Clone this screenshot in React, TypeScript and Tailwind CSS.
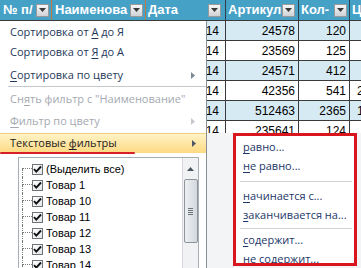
import React from "react";

const rows = [
  { date: "12.01.2014", art: "24578", qty: "120", price: "" },
  { date: "15.01.2014", art: "23569", qty: "125", price: "" },
  { date: "20.01.2014", art: "24571", qty: "412", price: "" },
  { date: "22.01.2014", art: "42356", qty: "541", price: "250" },
  { date: "25.01.2014", art: "512463", qty: "2365", price: "150" },
  { date: "28.01.2014", art: "235641", qty: "124", price: "" },
];

const items = ["(Выделить все)", "Товар 1", "Товар 10", "Товар 11", "Товар 12", "Товар 13", "Товар 14", "Товар 15"];

function FilterButton() {
  return (
    <div className="w-[13px] h-[13px] border border-[#9a9a9a] bg-gradient-to-b from-[#f7f7f7] to-[#cfd2d6] flex items-center justify-center shrink-0">
      <svg width="7" height="4" viewBox="0 0 7 4">
        <path d="M0 0h7L3.5 4z" fill="#3a3a3a" />
      </svg>
    </div>
  );
}

function SubArrow({ color = "#7d8896" }) {
  return (
    <svg width="4" height="7" viewBox="0 0 4 7" className="shrink-0">
      <path d="M0 0l4 3.5L0 7z" fill={color} />
    </svg>
  );
}

function MenuItem({
  children,
  disabled,
  arrow,
  className = "",
}: {
  children: React.ReactNode;
  disabled?: boolean;
  arrow?: boolean;
  className?: string;
}) {
  return (
    <div
      className={`flex items-center shrink-0 h-[20px] pl-[10px] pr-[11px] ${
        disabled ? "text-[#a4a9b0]" : "text-[#1e395b]"
      } ${className}`}
    >
      <span className="flex-1 whitespace-nowrap overflow-hidden">{children}</span>
      {arrow && <SubArrow color={disabled ? "#c3c8ce" : "#7d8896"} />}
    </div>
  );
}

function CheckBox() {
  return (
    <div className="w-[11px] h-[11px] border border-[#6f7479] bg-gradient-to-br from-[#ffffff] to-[#e3e5e8] flex items-center justify-center shrink-0">
      <svg width="9" height="9" viewBox="0 0 9 9">
        <path d="M1 4.2l2.3 2.4L8 1.5" stroke="#111" strokeWidth="1.9" fill="none" />
      </svg>
    </div>
  );
}

function SubItem({ first, rest }: { first: string; rest: string }) {
  return (
    <div className="h-[19px] shrink-0 flex items-center pl-[7px] text-[#1d3767] whitespace-nowrap">
      <span className="underline underline-offset-[2px]">{first}</span>
      {rest}
    </div>
  );
}

export default function App() {
  return (
    <div className="relative w-[361px] h-[268px] overflow-hidden bg-white font-['Liberation_Sans',sans-serif]">
      {/* header */}
      <div className="flex h-[21px] bg-[#46a1c7] text-white font-bold text-[13px] border-b border-[#3a3a3a]">
        <div className="w-[51px] shrink-0 flex items-center pl-[3px] pr-[2px] justify-between">
          <span>№ п/</span>
          <FilterButton />
        </div>
        <div className="w-[95px] shrink-0 flex items-center pl-[3px] pr-[2px] justify-between border-x border-[#c2793f]">
          <span>Наименова</span>
          <FilterButton />
        </div>
        <div className="w-[79px] shrink-0 flex items-center pl-[2px] pr-[4px] justify-between">
          <span>Дата</span>
          <FilterButton />
        </div>
        <div className="w-[73px] shrink-0 flex items-center pl-[2px] pr-[3px] justify-between border-l border-[#2e3e48]">
          <span>Артикул</span>
          <FilterButton />
        </div>
        <div className="w-[51px] shrink-0 flex items-center pl-[2px] pr-[2px] justify-between border-l border-[#2e3e48]">
          <span>Кол-</span>
          <FilterButton />
        </div>
        <div className="w-[40px] shrink-0 flex items-center pl-[2px] border-l border-[#2e3e48]">
          <span>Ц</span>
        </div>
      </div>

      {/* table body */}
      {rows.map((r, i) => (
        <div
          key={r.art}
          className={`flex h-[20px] text-[12px] text-black border-b border-[#3a3a3a] ${
            i % 2 === 0 ? "bg-[#d5eaf3]" : "bg-white"
          }`}
        >
          <div className="w-[51px] shrink-0" />
          <div className="w-[95px] shrink-0" />
          <div className="w-[79px] shrink-0 flex items-center justify-end pr-[6px]">{r.date}</div>
          <div className="w-[73px] shrink-0 flex items-center justify-end pr-[3px] border-l border-[#3a3a3a]">{r.art}</div>
          <div className="w-[51px] shrink-0 flex items-center justify-end pr-[3px] border-l border-[#3a3a3a]">{r.qty}</div>
          <div className="w-[40px] shrink-0 flex items-center pl-[7px] border-l border-[#3a3a3a]">{r.price}</div>
        </div>
      ))}

      {/* filter dropdown menu */}
      <div className="absolute left-0 top-[21px] w-[207px] h-[247px] bg-white border-r border-[#8a8f96] flex flex-col font-['Open_Sans',sans-serif] text-[11px]">
        <MenuItem className="mt-[1px]">
          Сортировка от <span className="underline underline-offset-[2px]">А</span> до Я
        </MenuItem>
        <MenuItem>
          Сортировка от <span className="underline underline-offset-[2px]">Я</span> до А
        </MenuItem>
        <MenuItem arrow className="mt-[3px]">
          <span className="underline underline-offset-[2px]">С</span>ортировка по цвету
        </MenuItem>
        <div className="h-[3px] shrink-0 flex items-center pl-[8px]">
          <div className="h-px w-full bg-[#c5c8cc]" />
        </div>
        <MenuItem disabled className="mt-[1px]">
          Сн<span className="underline underline-offset-[2px]">я</span>ть фильтр с "Наименование"
        </MenuItem>
        <MenuItem disabled arrow className="mt-[2px]">
          <span className="underline underline-offset-[2px]">Ф</span>ильтр по цвету
        </MenuItem>
        <div className="mt-[2px] h-[20px] shrink-0 flex items-center pl-[10px] pr-[10px] text-[#1b1b1b] bg-gradient-to-b from-[#fff3c6] to-[#fdd981] border-t border-[#f1cf7d]">
          <span className="flex-1 whitespace-nowrap">
            Текстовые <span className="underline underline-offset-[2px]">ф</span>ильтры
          </span>
          <SubArrow color="#4d5866" />
        </div>

        {/* value list */}
        <div className="mt-[4px] ml-[18px] mr-[7px] flex-1 min-h-0 overflow-hidden flex border border-[#a8aeb5] border-b-0 font-['Liberation_Sans',sans-serif] text-[11px] text-black">
          <div className="flex-1 flex flex-col pt-[3px] pl-[3px]">
            {items.map((t, i) => (
              <div key={t} className="flex items-center h-[16px] shrink-0">
                <div className="w-[10px] h-[16px] flex flex-col shrink-0">
                  <div
                    className={`h-[8px] border-b border-dotted border-[#7a7a7a] ${
                      i === 0 ? "" : "border-l"
                    }`}
                  />
                  <div className="h-[8px] border-l border-dotted border-[#7a7a7a]" />
                </div>
                <CheckBox />
                <span className="ml-[3px] whitespace-nowrap">{t}</span>
              </div>
            ))}
          </div>
          <div className="w-[16px] bg-[#f1f2f4] border-l border-[#d6d9dd] flex flex-col items-center">
            <div className="h-[21px] shrink-0 flex items-center justify-center">
              <svg width="7" height="4" viewBox="0 0 7 4">
                <path d="M0 4L3.5 0L7 4z" fill="#4b5560" />
              </svg>
            </div>
            <div className="w-[14px] h-[64px] shrink-0 border border-[#8d949c] rounded-[2px] bg-gradient-to-r from-[#eef0f2] to-[#d3d7dc] flex flex-col items-center justify-center gap-[1px]">
              <div className="w-[5px] h-px bg-[#6d747c]" />
              <div className="w-[5px] h-px bg-[#6d747c]" />
              <div className="w-[5px] h-px bg-[#6d747c]" />
              <div className="w-[5px] h-px bg-[#6d747c]" />
            </div>
          </div>
        </div>
      </div>

      {/* red annotation under text filters */}
      <div className="absolute left-0 top-[152px] w-[135px] h-[2px] bg-[#d71f27] rounded-full" />

      {/* text filters submenu */}
      <div className="absolute left-[207px] top-[133px] right-0 bottom-0 bg-[#f2f4f6] font-['Open_Sans',sans-serif] text-[11px]">
        <div className="ml-[26px] w-[124px] h-[133px] border-[3px] border-[#d9161e] bg-white flex flex-col pt-[2px] overflow-hidden">
          <SubItem first="р" rest="авно..." />
          <SubItem first="н" rest="е равно..." />
          <div className="h-[11px] shrink-0 flex items-center pl-[4px] pr-[2px]">
            <div className="h-px w-full bg-[#cfd2d6]" />
          </div>
          <SubItem first="н" rest="ачинается с..." />
          <SubItem first="з" rest="аканчивается на..." />
          <div className="h-[6px] shrink-0 flex items-center pl-[4px] pr-[2px]">
            <div className="h-px w-full bg-[#cfd2d6]" />
          </div>
          <SubItem first="с" rest="одержит..." />
          <SubItem first="н" rest="е содержит..." />
        </div>
      </div>
    </div>
  );
}
